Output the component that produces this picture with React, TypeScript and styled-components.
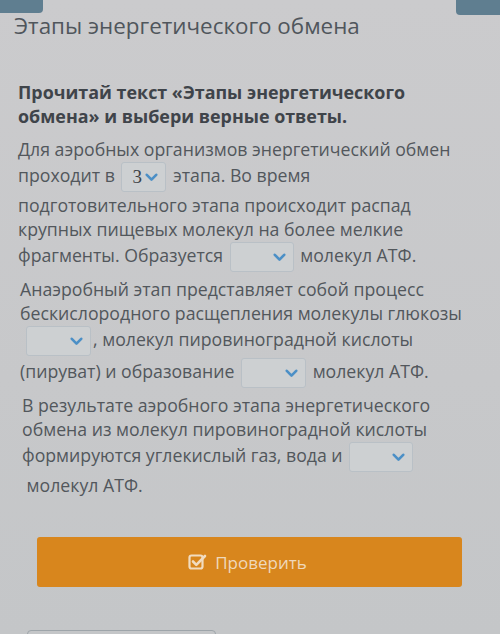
import styled, { createGlobalStyle } from 'styled-components';

const GlobalStyle = createGlobalStyle`
    html, body{
        margin: 0;
        padding: 0;
    }
    body{
        background: #c9cacc;
        font-family: "Open Sans", "Liberation Sans", sans-serif;
        color: #4f5459;
    }
`;

type Gap = { width: number; value?: string; lead?: boolean };

function Select({ width, value, lead }: Gap) {
    return (
        <StyledSelect $width={width} $lead={lead}>
            <span className="value">{value}</span>
            <svg width="13" height="9" viewBox="0 0 13 9">
                <path d="M1.8 1.8 L6.5 6.6 L11.2 1.8" fill="none" stroke="#4b8fc6" strokeWidth="2.6" strokeLinecap="round" strokeLinejoin="round" />
            </svg>
        </StyledSelect>
    );
}

export default function App() {
    return (
        <Page>
            <GlobalStyle />
            <TabStrip>
                <Tab $width={43} $height={13} />
                <Tab $width={44} $height={15} $right />
            </TabStrip>
            <Title>Этапы энергетического обмена</Title>
            <Task>
                <Prompt>Прочитай текст «Этапы энергетического<br />обмена» и выбери верные ответы.</Prompt>
                <Paragraph>
                    Для аэробных организмов энергетический обмен<br />
                    проходит в <Select width={45} value="3" /> этапа. Во время<br />
                    подготовительного этапа происходит распад<br />
                    крупных пищевых молекул на более мелкие<br />
                    фрагменты. Образуется <Select width={64} /> молекул АТФ.
                </Paragraph>
                <Paragraph $indent={2}>
                    Анаэробный этап представляет собой процесс<br />
                    бескислородного расщепления молекулы глюкозы<br />
                    <Select width={65} lead />, молекул пировиноградной кислоты<br />
                    (пируват) и образование <Select width={65} /> молекул АТФ.
                </Paragraph>
                <Paragraph $indent={4}>
                    В результате аэробного этапа энергетического<br />
                    обмена из молекул пировиноградной кислоты<br />
                    формируются углекислый газ, вода и <Select width={64} /><br />
                    &nbsp;молекул АТФ.
                </Paragraph>
            </Task>
            <Actions>
                <CheckButton>
                    <svg width="20" height="18" viewBox="0 0 20 18">
                        <rect x="1.5" y="2.5" width="13" height="13" rx="2" fill="none" stroke="#f1dcc0" strokeWidth="2.2" />
                        <path d="M5 8.5 L8.3 11.8 L17 3" fill="none" stroke="#f1dcc0" strokeWidth="2.6" strokeLinecap="round" strokeLinejoin="round" />
                    </svg>
                    Проверить
                </CheckButton>
            </Actions>
            <Footer>
                <OutlineButton />
            </Footer>
        </Page>
    );
}

const Page = styled.div`
    width: 500px;
    height: 634px;
    overflow: hidden;
    display: flex;
    flex-direction: column;
    background: linear-gradient(180deg, #cbcbcd 0%, #c7c8ca 60%, #c4c6c8 100%);
`;

const TabStrip = styled.div`
    display: flex;
    justify-content: space-between;
    align-items: flex-start;
    height: 12px;
`;

const Tab = styled.div<{ $width: number; $height: number; $right?: boolean }>`
    width: ${({ $width }) => $width}px;
    height: ${({ $height }) => $height}px;
    background: #5f7e90;
    border-radius: ${({ $right }) => ($right ? '0 0 0 4px' : '0 0 4px 0')};
`;

const Title = styled.h1`
    margin: 0 0 0 14px;
    font-size: 22.4px;
    line-height: 28px;
    font-weight: 400;
    color: #50565c;
`;

const Task = styled.div`
    padding: 40px 0 0 18px;
    white-space: nowrap;
`;

const Prompt = styled.p`
    margin: 0 0 9px;
    font-size: 17.9px;
    line-height: 24px;
    font-weight: 700;
    color: #3f444a;
`;

const Paragraph = styled.p<{ $indent?: number }>`
    margin: 0 0 4px;
    padding-left: ${({ $indent }) => $indent || 0}px;
    font-size: 17.7px;
    line-height: 24px;
    color: #52575c;
`;

const StyledSelect = styled.span<{ $width: number; $lead?: boolean }>`
    display: inline-flex;
    align-items: center;
    justify-content: space-between;
    box-sizing: border-box;
    width: ${({ $width }) => $width}px;
    height: 30px;
    margin: 1px 2px 1px ${({ $lead }) => ($lead ? 6 : 2)}px;
    padding: 0 7px 0 10px;
    vertical-align: middle;
    border: 1px solid #b9c0c6;
    border-radius: 3px;
    background: #cdd0d2;
    .value{
        font-family: "Liberation Serif", serif;
        font-size: 19px;
        color: #3e4247;
    }
`;

const Actions = styled.div`
    padding: 36px 38px 0 37px;
`;

const CheckButton = styled.button`
    width: 100%;
    height: 50px;
    display: flex;
    align-items: center;
    justify-content: center;
    gap: 7px;
    border: none;
    border-radius: 3px;
    background: #d8861d;
    color: #efd8bb;
    font-family: "Open Sans", "Liberation Sans", sans-serif;
    font-size: 17px;
    padding-right: 10px;
`;

const Footer = styled.div`
    margin-top: auto;
    padding: 0 0 0 27px;
    height: 4px;
`;

const OutlineButton = styled.div`
    width: 187px;
    height: 20px;
    border: 1px solid #9ea5aa;
    border-radius: 4px;
`;
